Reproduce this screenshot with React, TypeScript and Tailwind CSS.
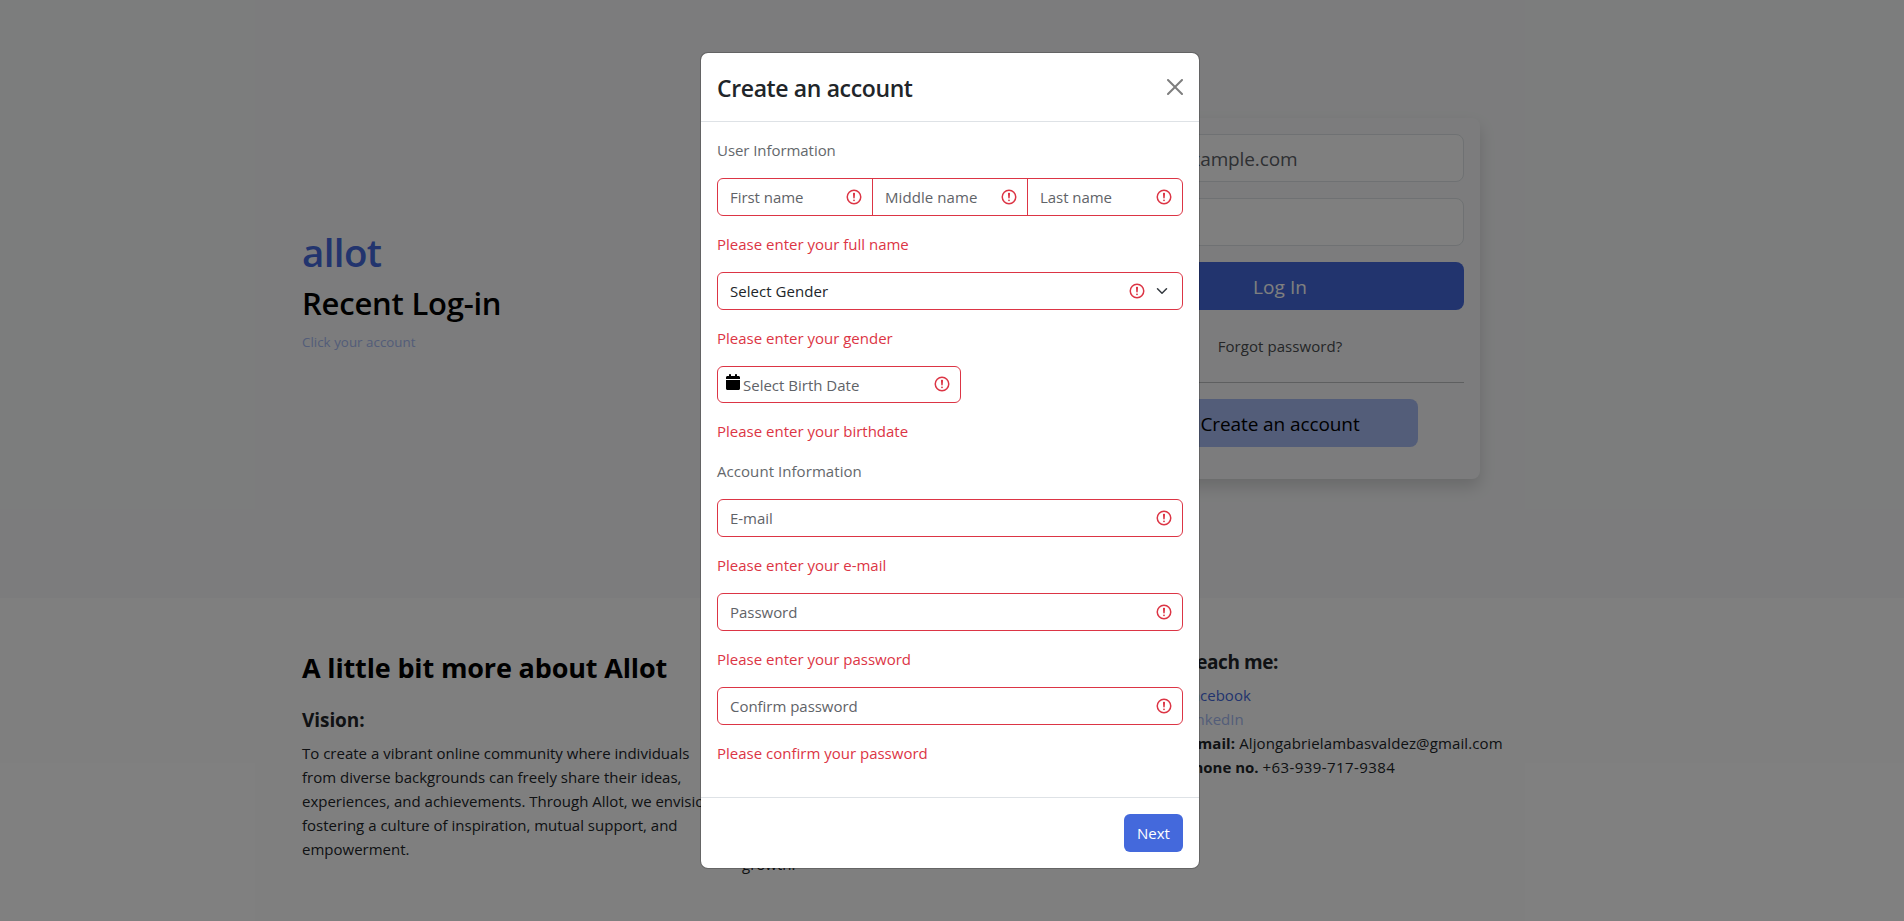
import type { ReactNode } from "react";

function InvalidIcon() {
  return (
    <svg viewBox="0 0 12 12" className="h-[18px] w-[18px] shrink-0" fill="none" stroke="#dc3545">
      <circle cx="6" cy="6" r="4.5" />
      <path strokeLinejoin="round" d="M5.8 3.6h.4L6 6.5z" />
      <circle cx="6" cy="8.2" r=".6" fill="#dc3545" stroke="none" />
    </svg>
  );
}

function ChevronIcon() {
  return (
    <svg viewBox="0 0 16 16" className="h-3 w-4 shrink-0" fill="none" stroke="#343a40">
      <path strokeLinecap="round" strokeLinejoin="round" strokeWidth="2" d="m2 5 6 6 6-6" />
    </svg>
  );
}

function CloseIcon() {
  return (
    <svg viewBox="0 0 16 16" className="h-4 w-4" fill="#000">
      <path d="M.293.293a1 1 0 0 1 1.414 0L8 6.586 14.293.293a1 1 0 1 1 1.414 1.414L9.414 8l6.293 6.293a1 1 0 0 1-1.414 1.414L8 9.414l-6.293 6.293a1 1 0 0 1-1.414-1.414L6.586 8 .293 1.707a1 1 0 0 1 0-1.414z" />
    </svg>
  );
}

function CalendarIcon() {
  return (
    <svg viewBox="0 0 448 512" className="h-4 w-3.5 shrink-0" fill="#000">
      <path d="M96 32V64H48C21.5 64 0 85.5 0 112v48H448V112c0-26.5-21.5-48-48-48H352V32c0-17.7-14.3-32-32-32s-32 14.3-32 32V64H160V32c0-17.7-14.3-32-32-32S96 14.3 96 32zM448 192H0V464c0 26.5 21.5 48 48 48H400c26.5 0 48-21.5 48-48V192z" />
    </svg>
  );
}

function Field({ label }: { label: string }) {
  return (
    <div className="flex h-[38px] items-center justify-between rounded-md border border-[#dc3545] bg-white pr-[9px] pl-3 tracking-[-0.03px] text-[#5f6368]">
      <span>{label}</span>
      <InvalidIcon />
    </div>
  );
}

function ErrorText({ children }: { children: ReactNode }) {
  return <p className="my-4 text-[#dc3545]">{children}</p>;
}

function LoginCard() {
  return (
    <div className="flex h-[361px] w-[400px] flex-col rounded-lg bg-[#f8f9fa] p-4 shadow-[0_8px_16px_rgba(0,0,0,0.15)]">
      <div className="mb-4 flex h-12 items-center rounded-lg border border-[#dee2e6] bg-white px-4 pt-0.5 text-[19px] tracking-[-0.13px] text-[#5c6167]">
        name@example.com
      </div>
      <div className="mb-4 h-12 rounded-lg border border-[#dee2e6] bg-white" />
      <button className="h-12 rounded-lg bg-[#4469dc] pt-0.5 text-[19px] tracking-[0.09px] text-white">Log In</button>
      <div className="mt-6 text-center tracking-[0.06px] text-[#4a4d50]">Forgot password?</div>
      <div className="mt-6 mb-4 h-px bg-[#bcbec0]" />
      <button className="h-12 w-[276px] self-center rounded-lg bg-[#a6baf2] pt-0.5 text-[19px] tracking-[-0.09px] text-black">
        Create an account
      </button>
    </div>
  );
}

function Hero() {
  return (
    <section className="flex h-[598px] justify-between bg-[#f8f9fa] pt-[118px] pr-[424px] pl-[302px]">
      <div className="pt-[110px]">
        <h1 className="h-12 text-[38.5px] leading-12 font-semibold tracking-[-0.61px] text-[#4469dc]">allot</h1>
        <h2 className="mt-[8px] h-[38px] text-[31px] leading-[38px] font-semibold tracking-[-0.22px] text-black">Recent Log-in</h2>
        <p className="mt-[10px] text-[13.3px] leading-[21px] tracking-[0.04px] text-[#a6baf2]">Click your account</p>
      </div>
      <LoginCard />
    </section>
  );
}

function About() {
  return (
    <section className="flex h-[323px] justify-center gap-6 overflow-hidden bg-white pt-12 pr-1 whitespace-nowrap text-[#212529]">
      <div className="w-[416px]">
        <h3 className="mt-[5px] h-[34px] text-[27px] leading-[34px] font-bold tracking-[-0.15px] text-black">
          A little bit more about Allot
        </h3>
        <h4 className="mt-[23px] mb-[9px] h-6 text-[19px] leading-6 font-bold tracking-[-0.07px]">Vision:</h4>
        <p>
          To create a vibrant online community where individuals
          <br />
          from diverse backgrounds can freely share their ideas,
          <br />
          experiences, and achievements. Through Allot, we envision
          <br />
          fostering a culture of inspiration, mutual support, and
          <br />
          empowerment.
        </p>
      </div>
      <div className="w-[416px] pt-[78px]">
        <h4 className="mb-2 h-6 text-[19px] leading-6 font-bold">Mission:</h4>
        <p>
          Our mission is to give people a simple and
          <br />
          welcoming space where they can connect,
          <br />
          share their stories, and inspire each other
          <br />
          toward continuous learning and personal
          <br />
          growth.
        </p>
      </div>
      <div className="w-[416px] pt-1 pl-0.5">
        <h4 className="mb-[9px] h-6 text-[19px] leading-6 font-bold tracking-[-0.4px]">Reach me:</h4>
        <p className="text-[#4469dc]">Facebook</p>
        <p className="text-[#a6baf2]">LinkedIn</p>
        <p className="tracking-[0.12px]">
          <b className="tracking-[0.1px]">E-mail:</b> Aljongabrielambasvaldez@gmail.com
        </p>
        <p>
          <b>Phone no.</b> <span className="tracking-[0.43px]">+63-939-717-9384</span>
        </p>
      </div>
    </section>
  );
}

function AccountModal() {
  return (
    <div className="flex h-[817px] w-[500px] flex-col rounded-lg border border-black/20 bg-white bg-clip-padding text-[#212529]">
      <header className="flex h-[69px] items-center justify-between border-b border-[#dee2e6] px-4">
        <h2 className="pt-0.5 text-[23px] leading-9 font-semibold tracking-[-0.37px]">Create an account</h2>
        <button className="mb-px opacity-50" aria-label="Close">
          <CloseIcon />
        </button>
      </header>
      <div className="grow px-4 pt-4">
        <p className="mb-4 tracking-[-0.06px] text-[#64686c]">User Information</p>
        <div className="flex h-[38px] divide-x divide-[#dc3545] rounded-md border border-[#dc3545] text-[#5f6368]">
          <div className="flex w-[155px] items-center justify-between pr-[9px] pl-3 tracking-[-0.05px]">
            First name
            <InvalidIcon />
          </div>
          <div className="flex w-[155px] items-center justify-between pr-[9px] pl-3 tracking-[0.08px]">
            Middle name
            <InvalidIcon />
          </div>
          <div className="flex grow items-center justify-between pr-[9px] pl-3 tracking-[-0.05px]">
            Last name
            <InvalidIcon />
          </div>
        </div>
        <ErrorText>Please enter your full name</ErrorText>
        <div className="flex h-[38px] items-center rounded-md border border-[#dc3545] pr-3 pl-3">
          <span className="grow tracking-[0.04px]">Select Gender</span>
          <InvalidIcon />
          <span className="ml-2">
            <ChevronIcon />
          </span>
        </div>
        <ErrorText>Please enter your gender</ErrorText>
        <div className="flex h-[37px] w-[244px] items-center rounded-md border border-[#dc3545] pr-[9px] pl-2">
          <span className="mb-[5px] flex">
            <CalendarIcon />
          </span>
          <span className="ml-[3px] grow text-[#5f6368]">Select Birth Date</span>
          <span className="mb-px flex">
            <InvalidIcon />
          </span>
        </div>
        <ErrorText>Please enter your birthdate</ErrorText>
        <p className="mb-4 tracking-[0.06px] text-[#64686c]">Account Information</p>
        <Field label="E-mail" />
        <ErrorText>Please enter your e-mail</ErrorText>
        <Field label="Password" />
        <ErrorText>Please enter your password</ErrorText>
        <Field label="Confirm password" />
        <ErrorText>Please confirm your password</ErrorText>
      </div>
      <footer className="flex h-[71px] items-center justify-end border-t border-[#dee2e6] px-4">
        <button className="h-[38px] w-[59px] rounded-md bg-[#4469dc] text-white">Next</button>
      </footer>
    </div>
  );
}

export default function App() {
  return (
    <div className="relative h-[921px] w-full overflow-hidden font-['Open_Sans','Noto_Sans',sans-serif] text-[15px] leading-6">
      <Hero />
      <About />
      <div className="absolute inset-0 flex justify-center bg-black/50 pt-[52px] pr-1">
        <AccountModal />
      </div>
    </div>
  );
}
